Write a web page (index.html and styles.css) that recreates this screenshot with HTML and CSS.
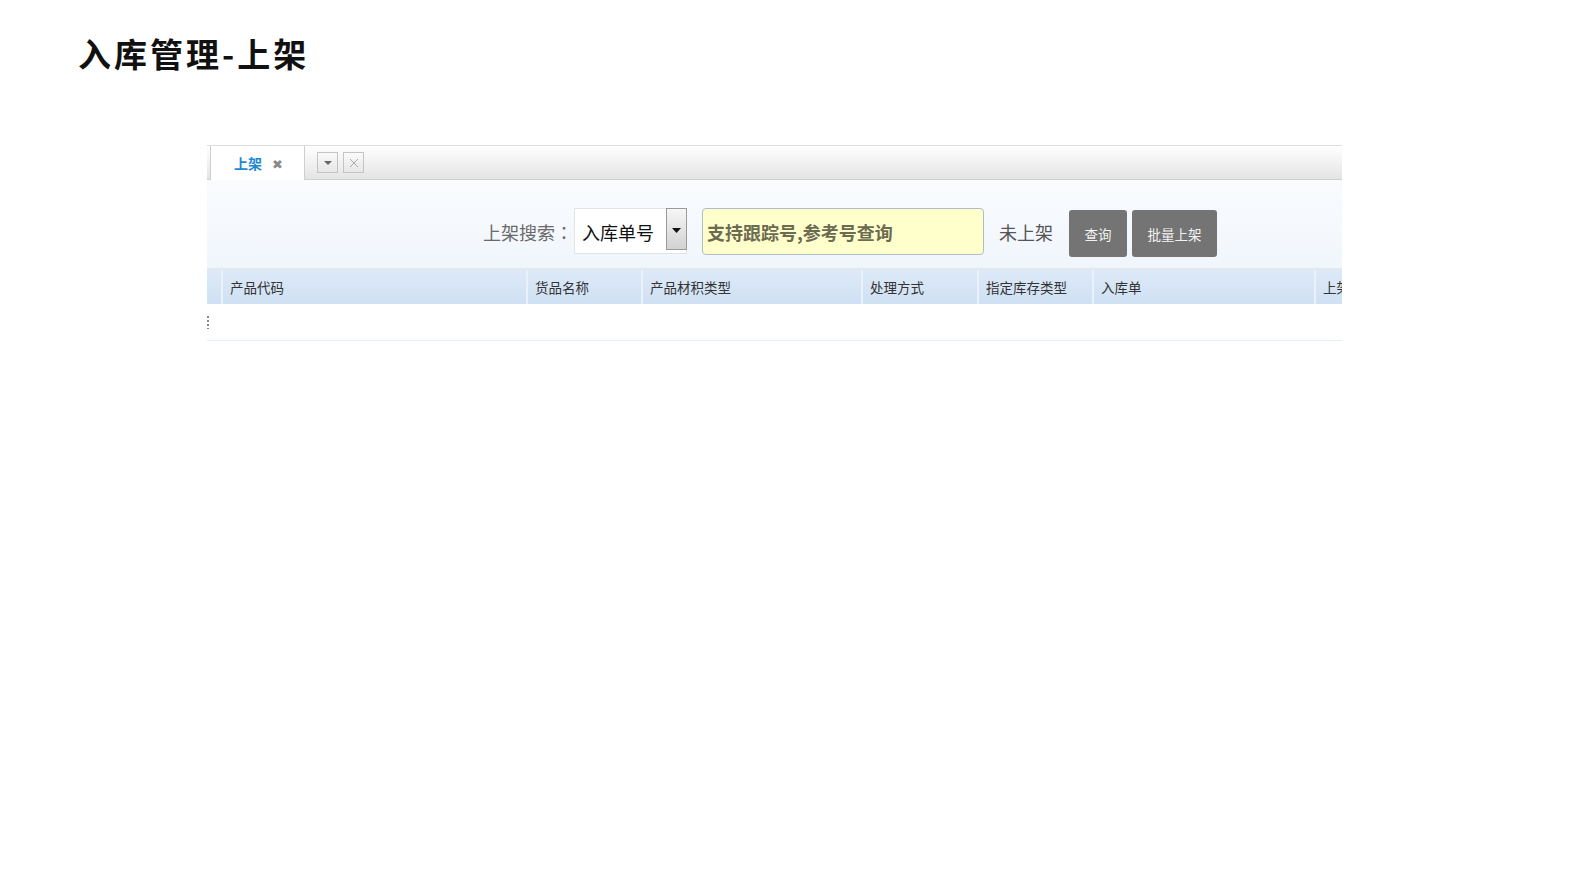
FILE: index.html
```html
<!DOCTYPE html>
<html lang="zh-CN">
<head>
    <meta charset="UTF-8">
    <meta name="viewport" content="width=device-width, initial-scale=1.0">
    <title>入库管理-上架</title>
    <link rel="stylesheet" href="styles.css">
</head>
<body>
    <h1 class="page-title">入库管理-上架</h1>

    <section class="frame">
        <div class="tab-bar">
            <div class="tab-gap"></div>
            <div class="tab">
                <span class="tab-label">上架</span>
                <span class="tab-close">&#10006;</span>
            </div>
            <div class="tab-tools">
                <span class="tool-btn">
                    <svg width="10" height="6" viewBox="0 0 10 6"><path d="M1 1 L9 1 L5 5 Z" fill="#666"/></svg>
                </span>
                <span class="tool-btn">
                    <svg width="10" height="10" viewBox="0 0 10 10"><path d="M1 1 L9 9 M9 1 L1 9" stroke="#aaa" stroke-width="1"/></svg>
                </span>
            </div>
        </div>

        <div class="search-bar">
            <span class="search-label">上架搜索<span class="colon" lang="zh-TW">：</span></span>
            <div class="select">
                <span class="select-value">入库单号</span>
                <span class="select-arrow">
                    <svg width="9" height="5" viewBox="0 0 9 5"><path d="M0 0 L9 0 L4.5 5 Z" fill="#111"/></svg>
                </span>
            </div>
            <div class="search-input">支持跟踪号,参考号查询</div>
            <span class="status">未上架</span>
            <button class="btn btn-query">查询</button>
            <button class="btn btn-batch">批量上架</button>
        </div>

        <div class="grid">
            <div class="grid-head">
                <div class="cell cell-mark"></div>
                <div class="cell">产品代码</div>
                <div class="cell">货品名称</div>
                <div class="cell">产品材积类型</div>
                <div class="cell">处理方式</div>
                <div class="cell">指定库存类型</div>
                <div class="cell">入库单</div>
                <div class="cell">上架</div>
            </div>
            <div class="grid-row">
                <span class="row-grip"></span>
            </div>
        </div>
    </section>
</body>
</html>
```

FILE: styles.css
```css
body {
    margin: 0;
    padding: 0;
    background-color: #fff;
    font-family: "Noto Sans CJK SC", "Noto Sans", sans-serif;
    color: #333;
}

.page-title {
    margin: 0;
    padding: 37px 0 0 78px;
    font-size: 33px;
    line-height: 33px;
    font-weight: bold;
    letter-spacing: 3px;
    color: #111;
}

.frame {
    margin: 75px 0 0 207px;
    width: 1135px;
    overflow: hidden;
}

/* tab strip */
.tab-bar {
    display: flex;
    height: 33px;
    border-top: 1px solid #dedede;
    border-bottom: 1px solid #cfcfcf;
    background: linear-gradient(#ffffff, #e4e4e4);
}

.tab-gap {
    width: 3px;
}

.tab {
    display: flex;
    align-items: center;
    width: 95px;
    height: 34px;
    box-sizing: border-box;
    padding-left: 23px;
    background-color: #fff;
    border-left: 1px solid #cfcfcf;
    border-right: 1px solid #cfcfcf;
}

.tab-label {
    font-size: 14px;
    font-weight: bold;
    color: #1f8ad0;
}

.tab-close {
    margin-left: 10px;
    font-size: 13px;
    color: #8a8a8a;
}

.tab-tools {
    display: flex;
    align-items: center;
    gap: 5px;
    padding-left: 12px;
}

.tool-btn {
    display: flex;
    align-items: center;
    justify-content: center;
    width: 19px;
    height: 19px;
    border: 1px solid #c4c4c4;
    background: linear-gradient(#fafafa, #e6e6e6);
}

/* search toolbar */
.search-bar {
    display: flex;
    align-items: flex-start;
    height: 60px;
    padding: 28px 0 0 276px;
    background: linear-gradient(#f9fbfe, #f1f6fc);
    border-bottom: 2px solid #e1e8f0;
}

.search-label {
    margin-top: 11px;
    font-size: 18px;
    color: #6a6a6a;
}

.colon {
    font-family: "Noto Sans CJK TC", sans-serif;
}

.select {
    display: flex;
    width: 113px;
    height: 46px;
    box-sizing: border-box;
    margin-left: 1px;
    background-color: #fff;
    border: 1px solid #e3e3e3;
}

.select-value {
    flex: 1;
    padding: 10px 0 0 7px;
    font-size: 18px;
    color: #111;
}

.select-arrow {
    display: flex;
    align-items: flex-start;
    justify-content: center;
    width: 21px;
    height: 42px;
    padding-top: 19px;
    box-sizing: border-box;
    margin: -1px -1px 0 0;
    border: 1px solid #9a9a9a;
    background: linear-gradient(#f6f6f6, #d2d2d2);
}

.search-input {
    width: 282px;
    height: 47px;
    box-sizing: border-box;
    margin-left: 15px;
    padding: 10px 0 0 4px;
    background-color: #ffffcc;
    border: 1px solid #aebccb;
    border-radius: 4px;
    font-size: 18px;
    font-weight: bold;
    color: #6b6b52;
}

.status {
    margin: 11px 0 0 15px;
    font-size: 18px;
    color: #555;
}

.btn {
    height: 47px;
    margin-top: 2px;
    padding: 0;
    border: none;
    border-radius: 3px;
    background-color: #747474;
    color: #f2f2f2;
    font-family: "Noto Sans CJK SC", sans-serif;
    font-size: 13.5px;
}

.btn-query {
    width: 58px;
    margin-left: 16px;
}

.btn-batch {
    width: 85px;
    margin-left: 5px;
}

/* grid */
.grid-head {
    display: grid;
    grid-template-columns: 16px 305px 115px 220px 116px 115px 222px 120px;
    height: 34px;
    background: linear-gradient(#dde9f7, #d0e1f4);
}

.cell {
    display: flex;
    align-items: center;
    padding-left: 7px;
    font-size: 13.5px;
    color: #333;
    white-space: nowrap;
    border-right: 2px solid #e9f1fa;
}

.cell-mark {
    padding: 0;
}

.grid-row {
    position: relative;
    height: 36px;
    border-bottom: 1px solid #e6edf4;
    background-color: #fff;
}

.row-grip {
    position: absolute;
    left: -1px;
    top: 12px;
    width: 3px;
    height: 13px;
    background: repeating-linear-gradient(#888 0 2px, transparent 2px 4px);
}
```
